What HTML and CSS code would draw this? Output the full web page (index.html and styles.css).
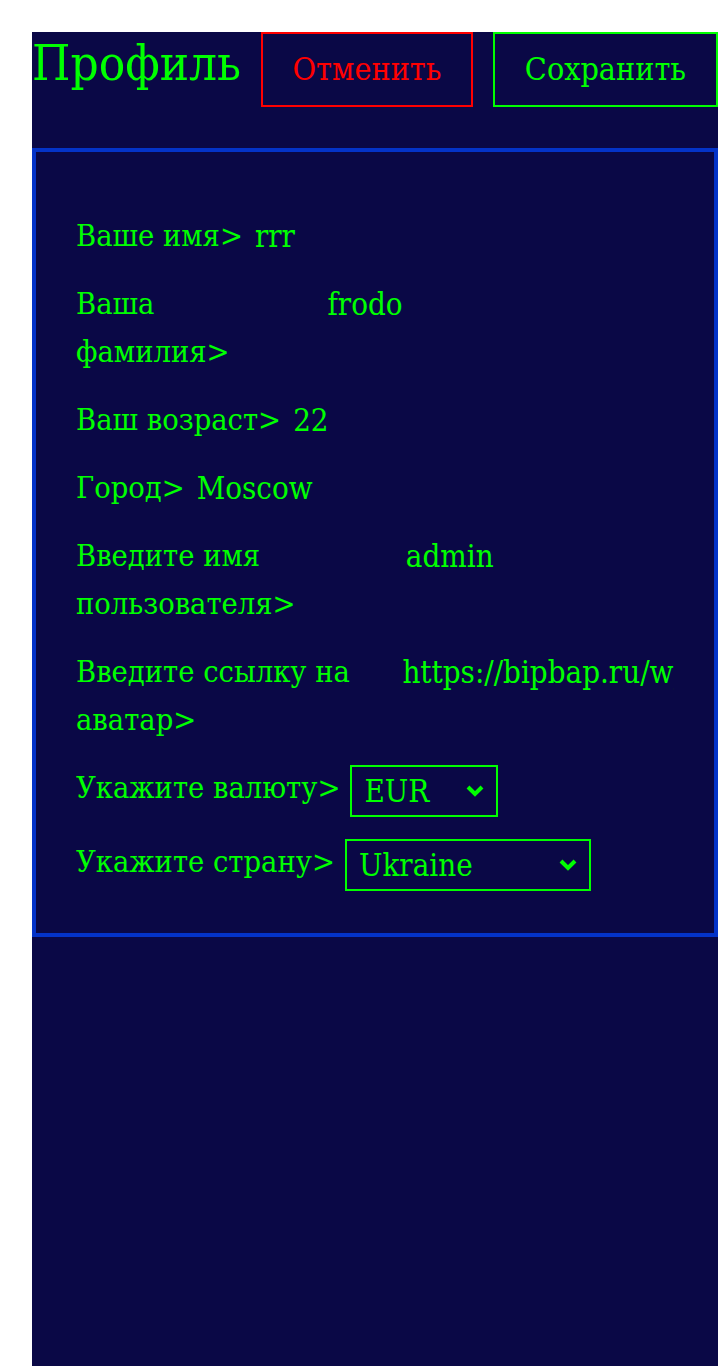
FILE: index.html
```html
<!DOCTYPE html>
<html lang="ru">
<head>
<meta charset="utf-8">
<title>Профиль</title>
<link rel="stylesheet" href="styles.css">
</head>
<body>
<div class="panel">
  <header class="profile-header">
    <h1 class="title">Профиль</h1>
    <button class="btn btn-cancel" type="button">Отменить</button>
    <button class="btn btn-save" type="button">Сохранить</button>
  </header>
  <form class="profile-form">
    <div class="field">
      <label class="field-label">Ваше имя&gt;</label>
      <input class="field-input" type="text" value="rrr">
    </div>
    <div class="field">
      <label class="field-label">Ваша фамилия&gt;</label>
      <input class="field-input" type="text" value="frodo">
    </div>
    <div class="field">
      <label class="field-label">Ваш возраст&gt;</label>
      <input class="field-input" type="text" value="22">
    </div>
    <div class="field">
      <label class="field-label">Город&gt;</label>
      <input class="field-input" type="text" value="Moscow">
    </div>
    <div class="field">
      <label class="field-label">Введите имя пользователя&gt;</label>
      <input class="field-input" type="text" value="admin">
    </div>
    <div class="field">
      <label class="field-label">Введите ссылку на аватар&gt;</label>
      <input class="field-input" type="text" value="https://bipbap.ru/wp-content/uploads/2017/04/0_7c779_5df17311_orig.jpg">
    </div>
    <div class="field">
      <label class="field-label">Укажите валюту&gt;</label>
      <span class="select-wrap select-currency">
        <select class="field-select">
          <option>EUR</option>
          <option>USD</option>
          <option>RUB</option>
        </select>
        <svg class="chevron" viewBox="0 0 18 12" aria-hidden="true"><polyline points="2,2 9,9 16,2"/></svg>
      </span>
    </div>
    <div class="field">
      <label class="field-label">Укажите страну&gt;</label>
      <span class="select-wrap select-country">
        <select class="field-select">
          <option>Ukraine</option>
          <option>Russia</option>
          <option>Belarus</option>
        </select>
        <svg class="chevron" viewBox="0 0 18 12" aria-hidden="true"><polyline points="2,2 9,9 16,2"/></svg>
      </span>
    </div>
  </form>
</div>
</body>
</html>
```

FILE: styles.css
```css
html, body {
  margin: 0;
  padding: 0;
  background: #ffffff;
}

body {
  font-family: "DejaVu Serif Condensed", "DejaVu Serif", serif;
  font-stretch: semi-condensed;
  color: #00ff00;
}

.panel {
  margin: 32px 0 0 32px;
  min-height: calc(100vh - 32px);
  background: #0a0846;
}

.profile-header {
  display: flex;
  align-items: baseline;
  justify-content: space-between;
}

.title {
  margin: 0;
  font-size: 49px;
  font-weight: normal;
  line-height: normal;
  color: #00ff00;
}

.btn {
  font-family: inherit;
  font-stretch: inherit;
  font-size: 32px;
  line-height: 35px;
  padding: 18px 30px;
  background: transparent;
  border: 2px solid;
  cursor: pointer;
}

.btn-cancel {
  color: #ff0000;
  border-color: #ff0000;
}

.btn-save {
  color: #00ff00;
  border-color: #00ff00;
}

.profile-form {
  margin-top: 41px;
  border: 4px solid #0433c8;
  padding: 60px 40px 41px;
  display: flex;
  flex-direction: column;
  gap: 20px;
}

.field {
  display: flex;
  align-items: flex-start;
  gap: 10px;
}

.field-label {
  flex: 0 1 auto;
  font-size: 30.5px;
  line-height: 48px;
  color: #00ff00;
}

.field-input {
  flex: 0 1 auto;
  width: 350px;
  min-width: 0;
  box-sizing: border-box;
  height: 48px;
  padding: 0 0 0 2px;
  border: none;
  outline: none;
  background: transparent;
  color: #00ff00;
  font-family: inherit;
  font-stretch: inherit;
  font-size: 31px;
}

.select-wrap {
  position: relative;
  flex: 0 0 auto;
  display: flex;
  margin: 1px 0;
}

.select-currency {
  width: 148px;
}

.select-country {
  width: 246px;
}

.field-select {
  -webkit-appearance: none;
  appearance: none;
  width: 100%;
  height: 52px;
  box-sizing: border-box;
  padding: 0 12px;
  border: 2px solid #00ff00;
  border-radius: 0;
  background: transparent;
  color: #00ff00;
  font-family: inherit;
  font-stretch: inherit;
  font-size: 31px;
}

.field-select option {
  background: #0a0846;
  color: #00ff00;
}

.chevron {
  position: absolute;
  right: 14px;
  top: 20px;
  width: 18px;
  height: 12px;
  pointer-events: none;
}

.chevron polyline {
  fill: none;
  stroke: #00ff00;
  stroke-width: 4;
}
```
